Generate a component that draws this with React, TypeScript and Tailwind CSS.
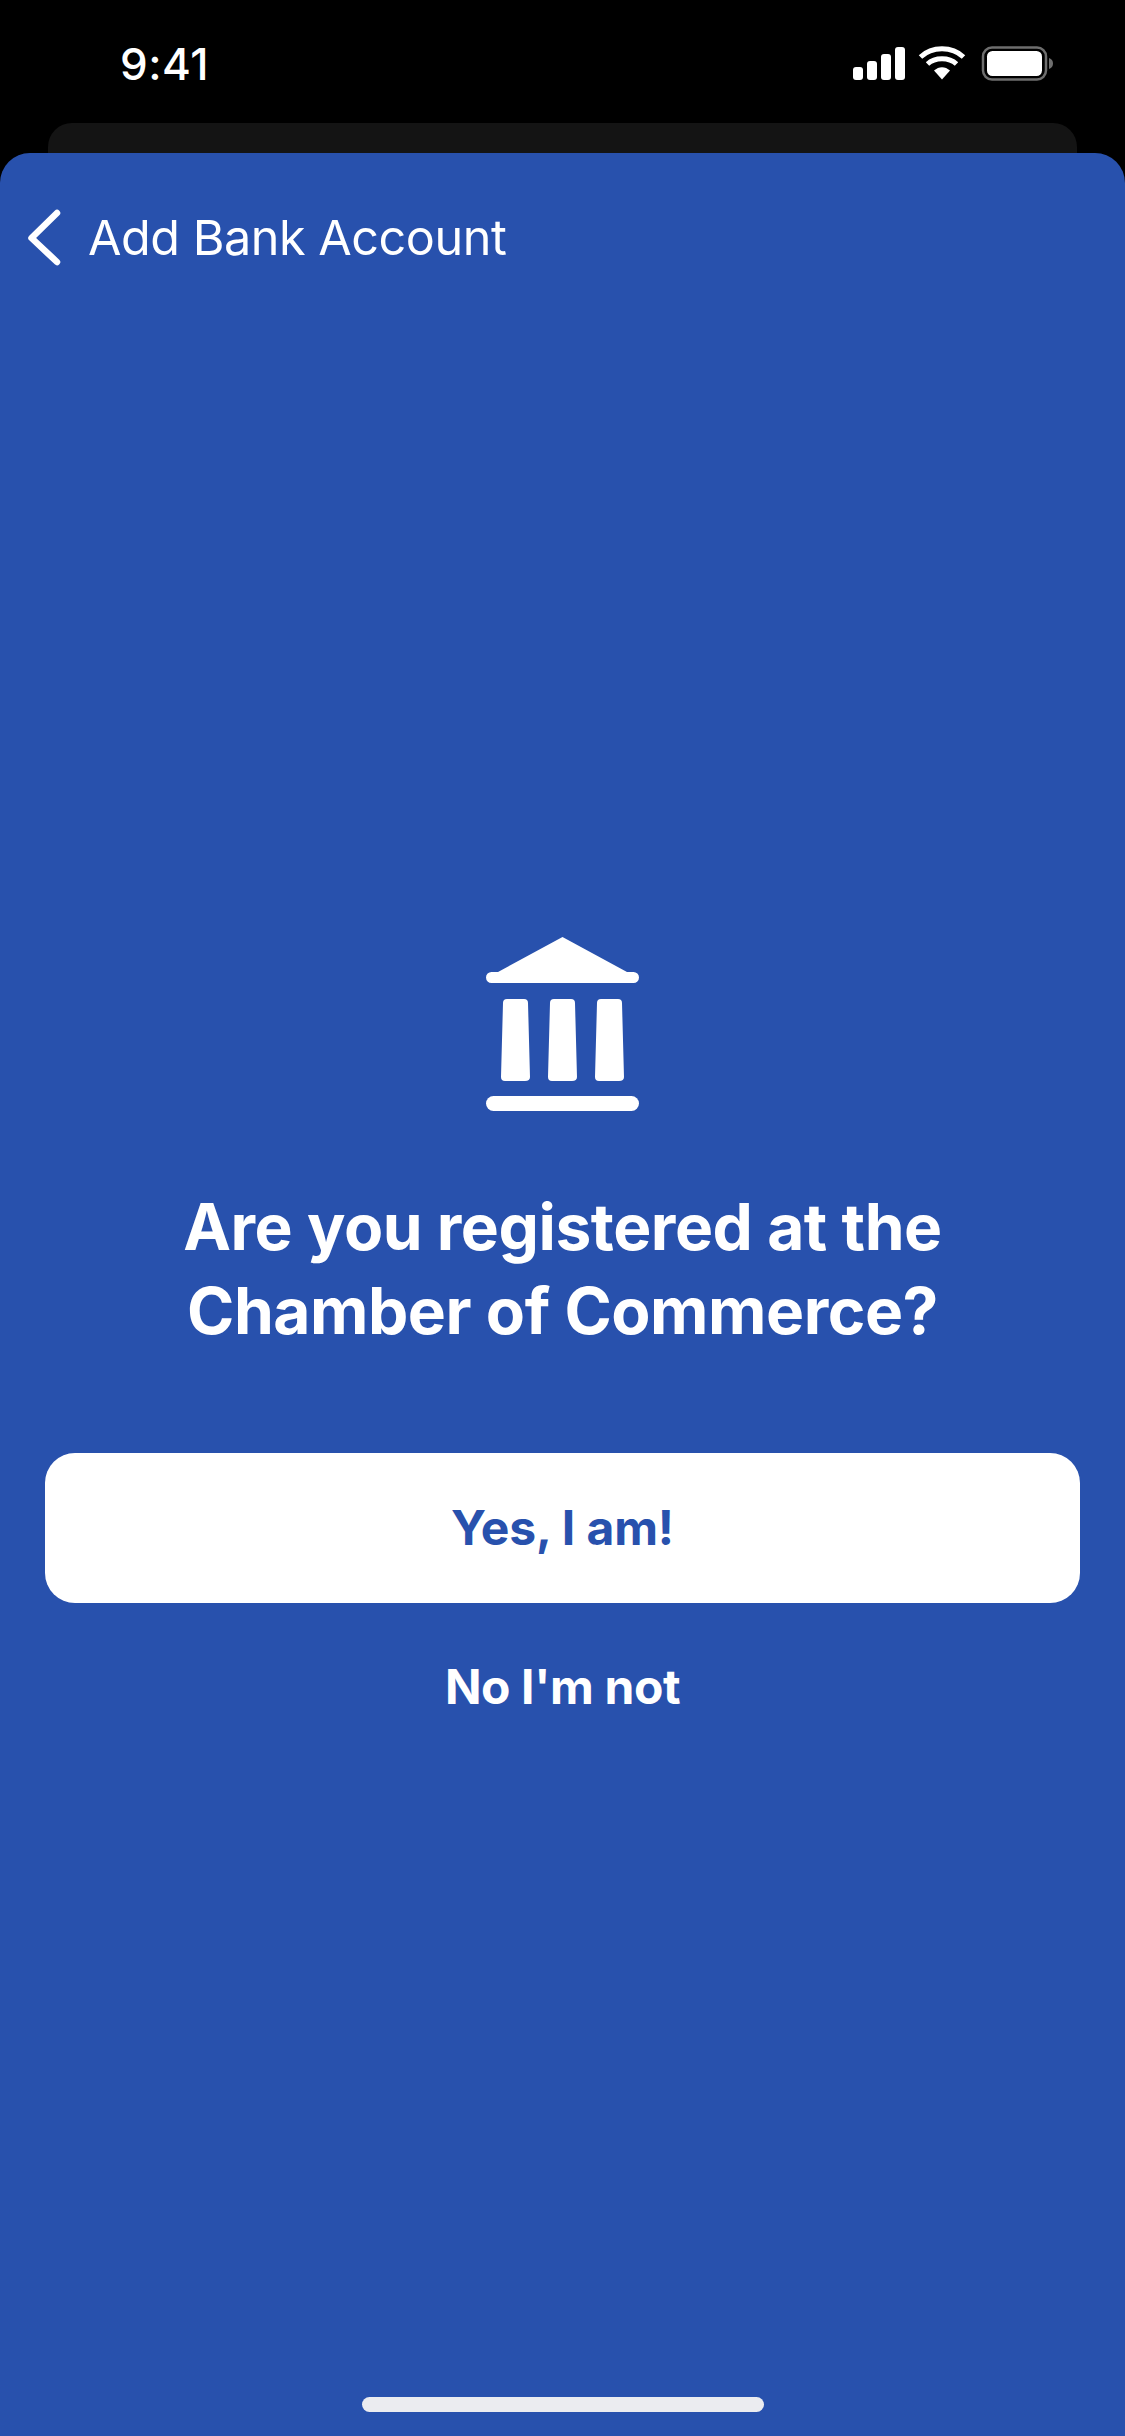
export default function App() {
  const font = { fontFamily: 'Inter, "Liberation Sans", sans-serif' };
  return (
    <div className="w-[1125px] h-[2436px] bg-black flex flex-col overflow-hidden" style={font}>
      {/* status bar */}
      <div className="h-[123px] flex items-start justify-between pt-[42px] pl-[120px] pr-[72px] shrink-0">
        <span className="text-[44px] leading-[44px] font-medium text-white tracking-[0.5px]">9:41</span>
        <svg width="200" height="36" viewBox="0 0 200 36" className="mt-[4px]">
          <g fill="#fff">
            <rect x="0" y="21" width="10" height="13" rx="3" />
            <rect x="14" y="15" width="10" height="19" rx="3" />
            <rect x="28" y="8" width="10" height="26" rx="3" />
            <rect x="42" y="1" width="10" height="33" rx="3" />
            <path d="M89 33.5 L81 24.5 C86 20 92 20 97 24.5 Z" />
          </g>
          <path d="M74.5 18 C82 11 96 11 103.5 18" stroke="#fff" strokeWidth="5" fill="none" />
          <path d="M67.5 11 C79 0 99 0 110.5 11" stroke="#fff" strokeWidth="5" fill="none" />
          <rect x="130" y="1.5" width="63" height="32" rx="9" fill="none" stroke="#6e6e6e" strokeWidth="2.5" />
          <rect x="134" y="5" width="55" height="25" rx="5.5" fill="#fff" />
          <path d="M196 12 C199 13 200 15 200 17.5 C200 20 199 22 196 23 Z" fill="#6e6e6e" />
        </svg>
      </div>
      {/* card behind */}
      <div className="h-[30px] mx-[48px] bg-[#141414] rounded-t-[24px] shrink-0" />
      {/* sheet */}
      <div className="flex-1 bg-[#2851ad] rounded-t-[30px] flex flex-col items-center">
        <div className="self-stretch flex items-center pl-[27px] pt-[52px] gap-[27px] h-[118px]">
          <svg width="34" height="58" viewBox="0 0 34 58">
            <path d="M30 4 L4.5 29 L30 53" stroke="#fff" strokeWidth="6.5" strokeLinecap="round" strokeLinejoin="round" fill="none" />
          </svg>
          <span className="text-[48.5px] leading-[60px] tracking-[-0.45px] text-white font-normal">Add Bank Account</span>
        </div>
        <svg width="153" height="174" viewBox="0 0 153 174" className="mt-[666px]">
          <g fill="#fff">
            <path d="M76.5 0 L141 35 L147.5 35 A5.5 5.5 0 0 1 147.5 46 L5.5 46 A5.5 5.5 0 0 1 5.5 35 L12 35 Z" />
            <path d="M21 62 Q17 62 17 66 L15 140 Q15 144 19 144 L39 144 Q44 144 44 140 L42 66 Q42 62 38 62 Z" />
            <path d="M68 62 Q64 62 64 66 L62 140 Q62 144 66 144 L86 144 Q91 144 91 140 L89 66 Q89 62 85 62 Z" />
            <path d="M115 62 Q111 62 111 66 L109 140 Q109 144 113 144 L133 144 Q138 144 138 140 L136 66 Q136 62 132 62 Z" />
            <rect x="0" y="159" width="153" height="15" rx="7.5" />
          </g>
        </svg>
        <h1 className="mt-[74px] text-center text-[64px] leading-[84px] tracking-[-0.45px] font-bold text-white">
          Are you registered at the
          <br />
          Chamber of Commerce?
        </h1>
        <button className="mt-[100px] w-[1035px] h-[150px] bg-white rounded-[30px] text-[#2851ad] text-[48px] tracking-[-0.1px] font-bold">
          Yes, I am!
        </button>
        <button className="mt-[59px] h-[50px] text-[48px] leading-[50px] tracking-[-0.4px] font-bold text-white">No I'm not</button>
        <div className="mt-auto mb-[24px] w-[402px] h-[15px] rounded-full bg-[#ebecf0]" />
      </div>
    </div>
  );
}
